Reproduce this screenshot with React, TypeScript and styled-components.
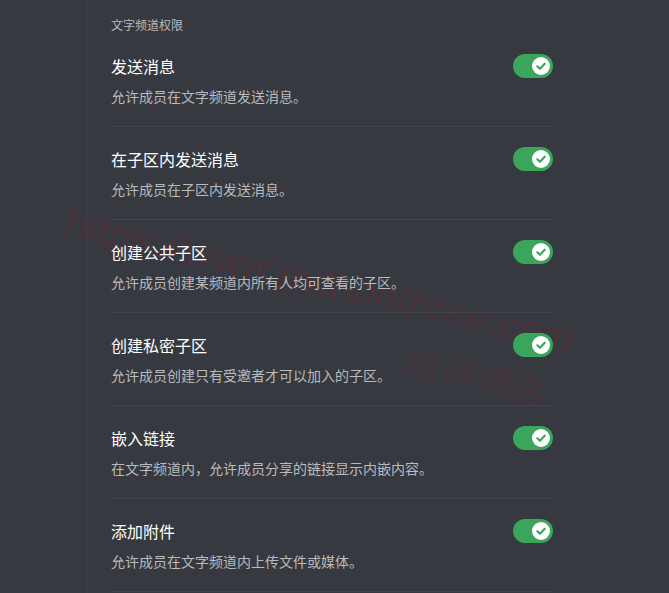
import React from "react";
import styled, { createGlobalStyle } from "styled-components";

const GlobalStyle = createGlobalStyle`
  html, body {
    margin: 0;
    padding: 0;
    background: #36393f;
  }
  body {
    font-family: "Noto Sans CJK SC", "Noto Sans", sans-serif;
    -webkit-font-smoothing: antialiased;
  }
`;

interface Permission {
  title: string;
  description: string;
  enabled: boolean;
}

const PERMISSIONS: Permission[] = [
  { title: "发送消息", description: "允许成员在文字频道发送消息。", enabled: true },
  { title: "在子区内发送消息", description: "允许成员在子区内发送消息。", enabled: true },
  { title: "创建公共子区", description: "允许成员创建某频道内所有人均可查看的子区。", enabled: true },
  { title: "创建私密子区", description: "允许成员创建只有受邀者才可以加入的子区。", enabled: true },
  { title: "嵌入链接", description: "在文字频道内，允许成员分享的链接显示内嵌内容。", enabled: true },
  { title: "添加附件", description: "允许成员在文字频道内上传文件或媒体。", enabled: true },
];

const Toggle: React.FC<{ on: boolean }> = ({ on }) => (
  <Switch $on={on}>
    <Knob>
      <svg width="12" height="12" viewBox="0 0 12 12">
        <path
          d="M2.3 6.3 L4.9 8.8 L9.7 3.7"
          fill="none"
          stroke="#3ba55c"
          strokeWidth="2.1"
          strokeLinecap="round"
          strokeLinejoin="round"
        />
      </svg>
    </Knob>
  </Switch>
);

const App: React.FC = () => {
  return (
    <>
      <GlobalStyle />
      <Page>
        <Watermark>
          <WatermarkUrl>https://www.pythonthree.com</WatermarkUrl>
          <WatermarkName>晓得博客</WatermarkName>
        </Watermark>
        <Sidebar />
        <Content>
          <SectionTitle>文字频道权限</SectionTitle>
          <List>
            {PERMISSIONS.map((perm) => (
              <Row key={perm.title}>
                <RowHeader>
                  <RowTitle>{perm.title}</RowTitle>
                  <Toggle on={perm.enabled} />
                </RowHeader>
                <RowDescription>{perm.description}</RowDescription>
              </Row>
            ))}
          </List>
        </Content>
      </Page>
    </>
  );
};

export default App;

const Page = styled.div`
  position: relative;
  display: flex;
  width: 669px;
  height: 593px;
  overflow: hidden;
  background: #36393f;
`;

const Sidebar = styled.div`
  width: 86px;
  flex-shrink: 0;
  border-right: 1px solid #404349;
`;

const Content = styled.div`
  position: relative;
  width: 442px;
  padding: 17px 0 0 24px;
  display: flex;
  flex-direction: column;
`;

const SectionTitle = styled.div`
  font-size: 12px;
  line-height: 16px;
  color: #b9bbbe;
  margin-bottom: 21px;
`;

const List = styled.div`
  display: flex;
  flex-direction: column;
`;

const Row = styled.div`
  padding: 20px 0 20px;
  border-bottom: 1px solid #42454b;

  &:first-child {
    padding-top: 0;
  }
`;

const RowHeader = styled.div`
  display: flex;
  align-items: center;
  justify-content: space-between;
  height: 24px;
`;

const RowTitle = styled.div`
  font-size: 16px;
  line-height: 20px;
  font-weight: 400;
  color: #ffffff;
`;

const RowDescription = styled.div`
  margin-top: 8px;
  font-size: 14px;
  line-height: 20px;
  color: #b9bbbe;
`;

const Switch = styled.div<{ $on: boolean }>`
  width: 40px;
  height: 24px;
  border-radius: 12px;
  background: ${(p) => (p.$on ? "#3ba55c" : "#72767d")};
  display: flex;
  align-items: center;
  justify-content: ${(p) => (p.$on ? "flex-end" : "flex-start")};
  padding: 0 3px;
  box-sizing: border-box;
`;

const Knob = styled.div`
  width: 18px;
  height: 18px;
  border-radius: 50%;
  background: #ffffff;
  display: flex;
  align-items: center;
  justify-content: center;
`;

const Watermark = styled.div`
  position: absolute;
  inset: 0;
  pointer-events: none;
  color: rgba(135, 30, 45, 0.27);
`;

const WatermarkUrl = styled.div`
  position: absolute;
  left: 66px;
  top: 200px;
  font-family: "Liberation Sans", sans-serif;
  font-size: 40px;
  letter-spacing: 0.3px;
  white-space: nowrap;
  transform-origin: left center;
  transform: rotate(13deg) skewX(-10deg);
`;

const WatermarkName = styled.div`
  position: absolute;
  left: 410px;
  top: 332px;
  font-family: "Noto Sans CJK SC", sans-serif;
  font-weight: 300;
  font-size: 37px;
  white-space: nowrap;
  transform-origin: left top;
  transform: rotate(13deg);
`;
